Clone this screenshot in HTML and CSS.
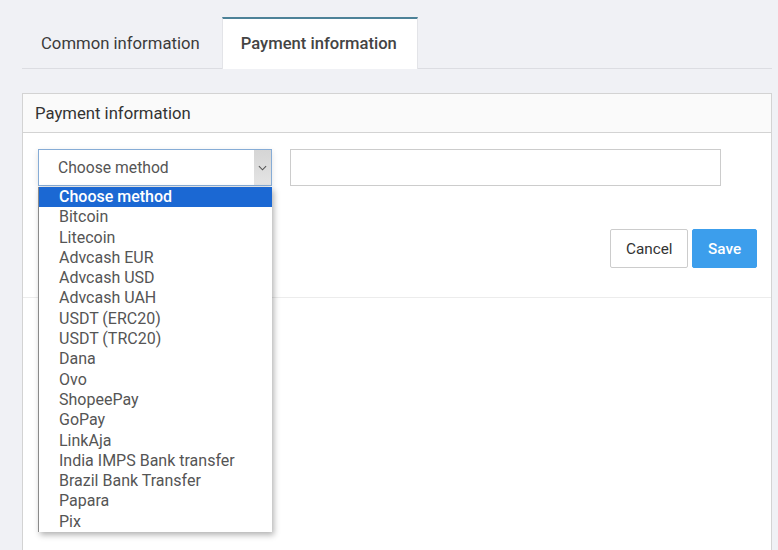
FILE: index.html
```html
<!DOCTYPE html>
<html lang="en">
  <head>
    <meta charset="UTF-8" />
    <meta name="viewport" content="width=device-width, initial-scale=1.0" />
    <title>Payment information</title>
    <link rel="stylesheet" href="styles.css">
  </head>
  <body>
    <div class="page">
      <div class="tabs">
        <div class="tab">Common information</div>
        <div class="tab active">Payment information</div>
      </div>

      <div class="panel">
        <div class="panel-header">Payment information</div>
        <div class="panel-body">
          <div class="form-row">
            <div class="select-wrap">
              <div class="select">
                <span>Choose method</span>
                <div class="select-arrow">
                  <svg viewBox="0 0 10 6" width="9" height="6">
                    <path d="M1 1l4 4 4-4" fill="none" stroke="#555" stroke-width="1.2" />
                  </svg>
                </div>
              </div>
              <!-- open list of the select -->
              <ul class="options">
                <li class="selected">Choose method</li>
                <li>Bitcoin</li>
                <li>Litecoin</li>
                <li>Advcash EUR</li>
                <li>Advcash USD</li>
                <li>Advcash UAH</li>
                <li>USDT (ERC20)</li>
                <li>USDT (TRC20)</li>
                <li>Dana</li>
                <li>Ovo</li>
                <li>ShopeePay</li>
                <li>GoPay</li>
                <li>LinkAja</li>
                <li>India IMPS Bank transfer</li>
                <li>Brazil Bank Transfer</li>
                <li>Papara</li>
                <li>Pix</li>
              </ul>
            </div>
            <input type="text" class="input" />
          </div>
          <div class="button-row">
            <button class="btn">Cancel</button>
            <button class="btn btn-primary">Save</button>
          </div>
        </div>
        <div class="panel-rest"></div>
      </div>
    </div>
  </body>
</html>
```

FILE: styles.css
```css
html,
body {
  margin: 0;
  font-family: Roboto, "Liberation Sans", Arial, sans-serif;
  font-weight: 400;
  color: #444;
}
body {
  background: #f0f1f5;
  height: 550px;
  overflow: hidden;
}
.page {
  padding: 17px 6px 0 22px;
}

/* tabs */
.tabs {
  display: flex;
  border-bottom: 1px solid #dcdde2;
}
.tab {
  padding: 0 22px 0 19px;
  height: 49px;
  line-height: 50px;
  border-top: 2px solid transparent;
  font-size: 16.7px;
  color: #3b3b3b;
}
.tab.active {
  background: #fff;
  border-top-color: #4d8298;
  border-left: 1px solid #e3e4e8;
  border-right: 1px solid #e3e4e8;
  margin-bottom: -1px;
  height: 50px;
  padding: 0 20px 0 18px;
  font-size: 16.6px;
  font-weight: 500;
  color: #444;
}

/* panel */
.panel {
  margin-top: 24px;
  width: 748px;
  border: 1px solid #d3d3d3;
  border-bottom: none;
  background: #fff;
}
.panel-header {
  height: 38px;
  line-height: 40px;
  padding: 0 12px;
  background: #fafafa;
  border-bottom: 1px solid #d3d3d3;
  font-size: 16.7px;
  color: #333;
}
.panel-body {
  padding: 16px 14px 29px 15px;
  border-bottom: 1px solid #ececec;
}
.panel-rest {
  height: 260px;
}
.form-row {
  display: flex;
  gap: 18px;
}
.select-wrap {
  position: relative;
}
.select {
  display: flex;
  align-items: center;
  justify-content: space-between;
  width: 232px;
  height: 35px;
  border: 1px solid #86acd6;
  box-shadow: 0 2px 6px rgba(0, 0, 0, 0.12);
  font-size: 15.7px;
  color: #555;
}
.select span {
  padding-left: 19px;
}
.select-arrow {
  display: flex;
  align-items: center;
  justify-content: center;
  width: 17px;
  height: 100%;
  background: linear-gradient(#d5d5d5, #e4e4e4);
}
.input {
  width: 431px;
  height: 37px;
  box-sizing: border-box;
  border: 1px solid #ccc;
  margin: 0;
}

.options {
  position: absolute;
  top: 38px;
  left: 0;
  width: 233px;
  margin: 0;
  padding: 0;
  list-style: none;
  background: #fff;
  border-left: 1px solid #8a8a8a;
  box-shadow: 2px 3px 6px rgba(0, 0, 0, 0.3);
  z-index: 2;
}
.options li {
  height: 20.3px;
  line-height: 20.3px;
  padding-left: 20px;
  font-size: 16px;
  color: #555;
}
.options li.selected {
  background: #1b68d3;
  color: #fff;
  font-weight: 500;
}

.button-row {
  display: flex;
  justify-content: flex-end;
  gap: 4px;
  margin-top: 43px;
}
.btn {
  height: 39px;
  padding: 0 15px;
  font-family: inherit;
  font-size: 15.3px;
  border: 1px solid #ccc;
  border-radius: 2px;
  background: #fff;
  color: #333;
}
.btn-primary {
  width: 65px;
  background: #3c9eec;
  border-color: #3c9eec;
  color: #fff;
  font-weight: 500;
}
.btn:first-child {
  width: 78px;
}
```
